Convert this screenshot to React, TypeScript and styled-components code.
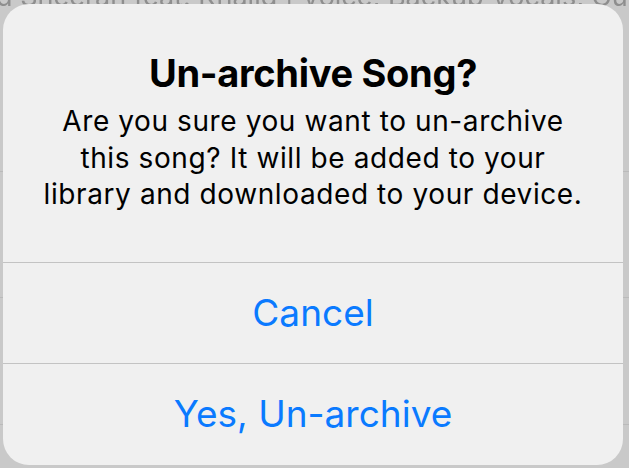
import React from "react";
import styled, { createGlobalStyle } from "styled-components";

const Global = createGlobalStyle`
  html, body { margin: 0; padding: 0; }
  body {
    width: 629px;
    height: 468px;
    overflow: hidden;
    font-family: Inter, "Noto Sans", "Liberation Sans", sans-serif;
    -webkit-font-smoothing: antialiased;
  }
`;

const Screen = styled.div`
  position: relative;
  width: 629px;
  height: 468px;
  overflow: hidden;
  background: #c9c9c9;
`;

const BackList = styled.div`
  display: flex;
  flex-direction: column;
  margin-top: -20px;
  filter: blur(0.6px);
`;

const BackCaption = styled.div`
  height: 34px;
  margin-left: -4px;
  font-size: 27px;
  line-height: 34px;
  color: #8e8e8e;
  white-space: nowrap;
  overflow: hidden;
`;

const BackRow = styled.div<{ $h: number }>`
  height: ${(p) => p.$h}px;
  border-bottom: 1px solid #bababa;
  box-sizing: border-box;
`;

const Alert = styled.div`
  position: absolute;
  left: 3px;
  top: 4px;
  width: 620px;
  height: 461px;
  border-radius: 26px;
  background: #f0f0f0;
  display: flex;
  flex-direction: column;
  overflow: hidden;
`;

const Body = styled.div`
  height: 258px;
  flex: none;
  box-sizing: border-box;
  padding: 46px 16px 0;
  display: flex;
  flex-direction: column;
  align-items: center;
  text-align: center;
`;

const Title = styled.h1`
  margin: 0;
  font-size: 38px;
  font-weight: 700;
  line-height: 46px;
  color: #000;
  letter-spacing: -0.3px;
  white-space: nowrap;
`;

const Message = styled.p`
  margin: 7px 0 0;
  font-size: 28px;
  font-weight: 400;
  line-height: 36.7px;
  color: #000;
  letter-spacing: 0.6px;
  white-space: nowrap;
`;

const Action = styled.button<{ $h: number }>`
  appearance: none;
  flex: none;
  border: 0;
  border-top: 1px solid #c3c3c3;
  background: transparent;
  height: ${(p) => p.$h}px;
  padding: 0 0 2px;
  font-family: inherit;
  font-size: 37px;
  font-weight: 400;
  color: #0a7aff;
  cursor: pointer;
  display: flex;
  align-items: center;
  justify-content: center;
`;

export default function App() {
  return (
    <Screen>
      <Global />
      <BackList>
        <BackCaption>d Sheeran feat. Khalid | Voice, Backup Vocals, Gu…</BackCaption>
        <BackRow $h={158} />
        <BackRow $h={126} />
        <BackRow $h={127} />
        <BackRow $h={126} />
      </BackList>
      <Alert role="alertdialog">
        <Body>
          <Title>Un-archive Song?</Title>
          <Message>
            Are you sure you want to un-archive
            <br />
            this song? It will be added to your
            <br />
            library and downloaded to your device.
          </Message>
        </Body>
        <Action $h={101}>Cancel</Action>
        <Action $h={102}>Yes, Un-archive</Action>
      </Alert>
    </Screen>
  );
}
